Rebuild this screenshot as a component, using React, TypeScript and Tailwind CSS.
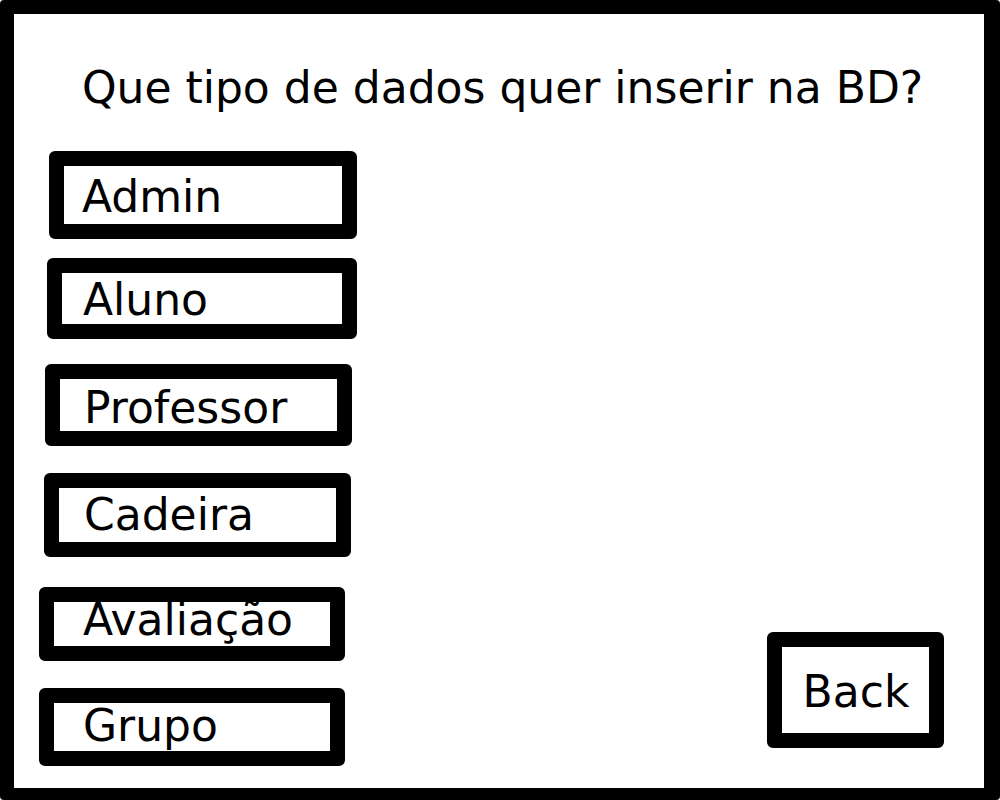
const options = [
  { label: "Admin", box: "ml-[35px] mt-[41px] w-[308px] h-[88px]", text: "pl-[18px] mt-[4px]" },
  { label: "Aluno", box: "ml-[33px] mt-[19px] w-[310px] h-[81px]", text: "pl-[21px] mt-[2px]" },
  { label: "Professor", box: "ml-[31px] mt-[25px] w-[307px] h-[82px]", text: "pl-[24px] mt-[6px]" },
  { label: "Cadeira", box: "ml-[30px] mt-[27px] w-[307px] h-[84px]", text: "pl-[25px] mt-[-1px]" },
  { label: "Avaliação", box: "ml-[25px] mt-[30px] w-[306px] h-[74px]", text: "pl-[29px] mt-[-8px]" },
  { label: "Grupo", box: "ml-[25px] mt-[27px] w-[306px] h-[78px]", text: "pl-[29px] mt-[-3px]" },
];

const App = () => {
  return (
    <div
      className="w-[1000px] h-[800px] bg-white border-black border-l-[14px] border-t-[14px] border-r-[16px] border-b-[12px] rounded-[4px] flex flex-col text-black"
      style={{ fontFamily: '"DejaVu Sans", sans-serif' }}
    >
      <h1 className="mt-[52px] pl-[7px] text-center text-[44px] leading-[44px] font-normal">
        Que tipo de dados quer inserir na BD?
      </h1>

      <div className="flex justify-between items-end">
        <div className="flex flex-col">
          {options.map((o) => (
            <button
              key={o.label}
              className={`${o.box} border-[15px] border-black rounded-[6px] overflow-hidden text-left bg-white`}
            >
              <span className={`block text-[44px] leading-[44px] whitespace-nowrap ${o.text}`}>
                {o.label}
              </span>
            </button>
          ))}
        </div>

        <button className="mb-[18px] mr-[40px] w-[177px] h-[116px] border-[15px] border-black rounded-[6px] bg-white flex items-center justify-center">
          <span className="block text-[44px] leading-[44px] mt-[4px] ml-[1px]">Back</span>
        </button>
      </div>
    </div>
  );
};

export default App;
